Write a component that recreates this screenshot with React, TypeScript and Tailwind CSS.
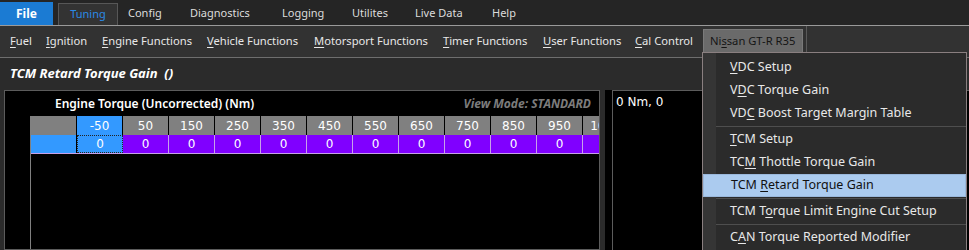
import React from "react";

function Acc({ text, i }: { text: string; i: number }) {
  return (
    <span className="whitespace-pre">
      {text.slice(0, i)}
      <span className="underline decoration-1 underline-offset-[2px]">{text[i]}</span>
      {text.slice(i + 1)}
    </span>
  );
}

const tabs = [
  { label: "Config", w: "w-[62px]" },
  { label: "Diagnostics", w: "w-[92px]" },
  { label: "Logging", w: "w-[70px]" },
  { label: "Utilites", w: "w-[63px]" },
  { label: "Live Data", w: "w-[77px]" },
  { label: "Help", w: "w-[40px]" },
];

const menus = [
  { label: "Fuel", i: 0, w: "w-[36px]" },
  { label: "Ignition", i: 0, w: "w-[56px]" },
  { label: "Engine Functions", i: 0, w: "w-[105px]" },
  { label: "Vehicle Functions", i: 0, w: "w-[107px]" },
  { label: "Motorsport Functions", i: 0, w: "w-[129px]" },
  { label: "Timer Functions", i: 0, w: "w-[100px]" },
  { label: "User Functions", i: 0, w: "w-[92px]" },
  { label: "Cal Control", i: 0, w: "w-[68px]" },
];

const cols = ["-50", "50", "150", "250", "350", "450", "550", "650", "750", "850", "950", "1050"];

type Item = { label: string; i: number; active?: boolean } | "sep";
const items: Item[] = [
  { label: "VDC Setup", i: 0 },
  { label: "VDC Torque Gain", i: 1 },
  { label: "VDC Boost Target Margin Table", i: 2 },
  "sep",
  { label: "TCM Setup", i: 0 },
  { label: "TCM Thottle Torque Gain", i: 2 },
  { label: "TCM Retard Torque Gain", i: 4, active: true },
  "sep",
  { label: "TCM Torque Limit Engine Cut Setup", i: 5 },
  "sep",
  { label: "CAN Torque Reported Modifier", i: 1 },
];

export default function App() {
  return (
    <div className="relative w-[969px] h-[250px] overflow-hidden bg-[#2b2b2b] font-['Noto_Sans',sans-serif] text-[12px] text-[#e6e6e6]">
      {/* tab row */}
      <div className="flex h-[26px] items-end bg-[#252525] border-b border-[#9a9a9a] text-[11px]">
        <div className="flex h-[23px] w-[53px] items-center justify-center bg-[#1b7bd3] text-[12px] font-bold text-white">File</div>
        <div className="ml-[5px] flex h-[22px] w-[60px] items-center justify-center border border-b-0 border-[#575757] bg-[#333333] text-[#2b8ae6]">
          Tuning
        </div>
        <div className="ml-[10px] flex h-[23px] items-center">
          {tabs.map((t) => (
            <div key={t.label} className={`${t.w} text-[#dcdcdc]`}>
              {t.label}
            </div>
          ))}
        </div>
      </div>

      {/* menu row */}
      <div className="flex h-[32px] items-center bg-[#323232] border-b border-[#6e6e6e] pl-[10px] text-[11.2px]">
        {menus.map((m) => (
          <div key={m.label} className={`${m.w} text-[#e8e8e8]`}>
            <Acc text={m.label} i={m.i} />
          </div>
        ))}
        <div className="flex h-[25px] w-[100px] items-center border border-[#7a7a7a] bg-[#6a6a6a] pl-[6px] text-[#151515]">
          <Acc text="Nissan GT-R R35" i={2} />
        </div>
        <div className="ml-[3px] h-[31px] w-px bg-[#5a5a5a]" />
      </div>

      {/* title */}
      <div className="flex h-[32px] items-center pl-[10px] text-[13px] font-bold italic text-white">
        TCM Retard Torque Gain&nbsp;&nbsp;()
      </div>

      {/* content */}
      <div className="flex h-[160px]">
        <div className="ml-[4px] flex w-[596px] flex-col overflow-hidden border border-[#5c5c5c] bg-black">
          <div className="flex h-[25px] items-center justify-between pl-[50px] pr-[8px]">
            <span className="text-[12px] font-semibold text-white">Engine Torque (Uncorrected) (Nm)</span>
            <span className="text-[12px] font-bold italic text-[#7c7c7c]">View Mode: STANDARD</span>
          </div>
          <div className="ml-[25px] flex flex-1 flex-col border-l border-[#808080]">
            <div className="flex h-[19px] font-['DejaVu_Sans',sans-serif] text-[12px] text-white">
              <div className="w-[46px] shrink-0 border-r border-black bg-[#808080]" />
              {cols.map((c, k) => (
                <div
                  key={c}
                  className={`flex w-[46px] shrink-0 items-center justify-center border-r border-black ${k === 0 ? "bg-[#3399ff]" : "bg-[#808080]"}`}
                >
                  {c}
                </div>
              ))}
            </div>
            <div className="flex h-[19px] border-b border-[#c8a0e8] font-['DejaVu_Sans',sans-serif] text-[12px] text-white">
              <div className="w-[46px] shrink-0 border-r border-black bg-[#3399ff]" />
              {cols.map((c, k) => (
                <div
                  key={c}
                  className={`flex w-[46px] shrink-0 items-center justify-center ${k === 0 ? "border border-dotted border-[#222] bg-[#3399ff]" : "border-r border-[#c8a0e8] bg-[#8000ff]"}`}
                >
                  0
                </div>
              ))}
            </div>
          </div>
        </div>
        <div className="w-[5px]" />
        <div className="w-[7px] bg-black" />
        <div className="flex-1 border-l border-t border-[#5c5c5c] bg-black pl-[3px] pt-[2px] font-['DejaVu_Sans',sans-serif] text-[12px] text-white">
          0 Nm, 0
        </div>
      </div>

      {/* dropdown */}
      <div className="absolute left-[702px] top-[52px] w-[265px] border border-[#8a7f80] bg-[#2b2b2b] pt-[3px] pb-[1px] text-[12.5px]">
        <div className="absolute bottom-0 left-0 top-0 w-[13px] bg-[#353535]" />
        {items.map((it, k) =>
          it === "sep" ? (
            <div key={k} className="relative flex h-[3px] items-center pl-[13px]">
              <div className="h-px w-full bg-[#4e4e4e]" />
            </div>
          ) : (
            <div
              key={k}
              className={`relative flex h-[23px] items-center pl-[27px] ${it.active ? "border border-[#9ab8dc] bg-[#abcbef] text-[#111]" : "text-[#e8e8e8]"}`}
            >
              <Acc text={it.label} i={it.i} />
            </div>
          )
        )}
      </div>
    </div>
  );
}
